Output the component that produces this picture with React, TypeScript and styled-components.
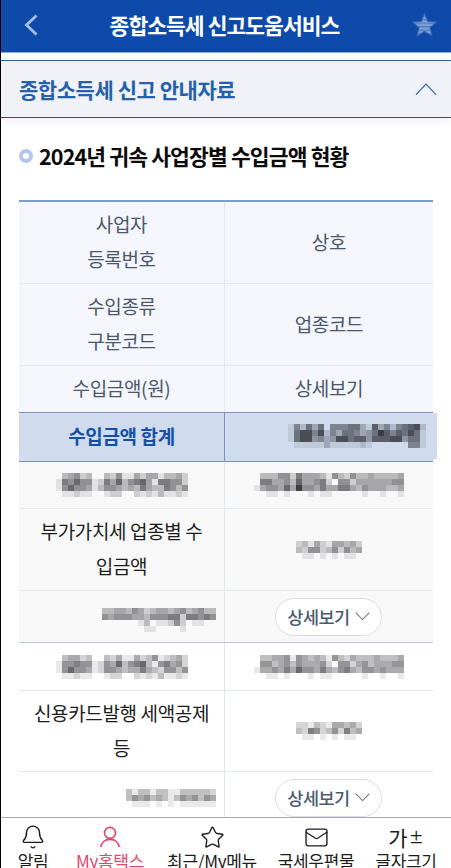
import React from "react";
import styled, { createGlobalStyle } from "styled-components";
import { Bell, Star, Mail } from "lucide-react";

const Global = createGlobalStyle`
  html, body { margin: 0; padding: 0; background: #fff; }
  body { font-family: "Noto Sans CJK KR", "Noto Sans", sans-serif; }
  * { box-sizing: border-box; }
`;

const Page = styled.div`
  width: 451px;
  height: 868px;
  overflow: hidden;
  display: flex;
  flex-direction: column;
  border-left: 1px solid #000;
  background: #fff;
`;

const Header = styled.header`
  flex: none;
  height: 53px;
  background: #0d4aa9;
  border-bottom: 1px solid #8fb0dc;
  display: flex;
  align-items: center;
  justify-content: space-between;
  padding: 0 13px 2px 23px;
  color: #fff;
`;

const HeaderTitle = styled.h1`
  margin: 0;
  font-size: 21.5px;
  font-weight: 700;
  letter-spacing: -0.95px;
  line-height: 30px;
`;

const Main = styled.main`
  flex: 1;
  min-height: 0;
  overflow: hidden;
  padding-top: 7px;
`;

const Accordion = styled.div`
  height: 58px;
  background: #f0f2f8;
  border-top: 1px solid #2c62aa;
  border-bottom: 1px solid #1f5298;
  box-shadow: 0 3px 9px rgba(30, 50, 90, 0.08);
  display: flex;
  align-items: center;
  justify-content: space-between;
  padding: 0 14px 0 18px;
`;

const AccordionTitle = styled.h2`
  margin: 0;
  font-size: 21px;
  font-weight: 700;
  letter-spacing: -0.45px;
  color: #2461a9;
  line-height: 28px;
`;

const SectionTitle = styled.h3`
  margin: 23px 0 29px 18px;
  display: flex;
  align-items: center;
  gap: 6px;
  font-size: 21.5px;
  line-height: 30px;
  font-weight: 700;
  letter-spacing: -0.85px;
  color: #0b0b0b;
`;

const Bullet = styled.span`
  width: 14px;
  height: 14px;
  border-radius: 50%;
  border: 4px solid #b2c6e6;
  background: #fff;
`;

const Table = styled.div`
  margin: 0 18px;
  border-top: 2px solid #7f9dc6;
`;

type Tone = "head" | "sum" | "gray" | "white";

const toneBg: Record<Tone, string> = {
  head: "#f4f6fb",
  sum: "#d0dcee",
  gray: "#f8f8f8",
  white: "#ffffff",
};

const Row = styled.div<{ $tone: Tone; $h: number; $line?: string }>`
  display: flex;
  height: ${(p) => p.$h}px;
  background: ${(p) => toneBg[p.$tone]};
  border-bottom: 1px solid ${(p) => p.$line ?? "#e3e8ef"};
  position: relative;
`;

const Cell = styled.div<{ $side: "l" | "r"; $tone: Tone; $end?: boolean }>`
  flex: ${(p) => (p.$side === "l" ? "0 0 206px" : "1 1 0")};
  min-width: 0;
  display: flex;
  align-items: center;
  justify-content: ${(p) => (p.$end ? "flex-end" : "center")};
  padding: 0 ${(p) => (p.$end ? 8 : 11)}px 0 ${(p) => (p.$end ? 0 : 11)}px;
  text-align: center;
  font-size: 19px;
  line-height: 35px;
  letter-spacing: -0.35px;
  color: ${(p) => (p.$tone === "head" ? "#4a566c" : "#1c1c1c")};
  border-right: ${(p) =>
    p.$side === "l" ? `1px solid ${p.$tone === "sum" ? "#7d92b5" : "#e1e7f0"}` : "none"};
`;

const CellText = styled.span`
  display: block;
  padding-bottom: 3px;
`;

const SumLabel = styled.strong`
  display: block;
  padding-bottom: 3px;
  font-weight: 700;
  color: #1550a8;
  letter-spacing: -0.35px;
`;

const SumPatch = styled.div`
  position: absolute;
  left: 244px;
  right: -4px;
  top: 0;
  bottom: 2px;
  background: #d0dcee;
  display: flex;
  align-items: center;
  justify-content: flex-end;
  padding-right: 11px;
`;

const DetailButton = styled.button`
  width: 107px;
  height: 38px;
  margin-left: -1px;
  border: 1px solid #d9dee6;
  border-radius: 19px;
  background: #fff;
  color: #4b5a72;
  font: 500 17.5px/24px "Noto Sans CJK KR", sans-serif;
  letter-spacing: -0.5px;
  display: flex;
  align-items: center;
  justify-content: center;
  gap: 5px;
  padding: 0;
`;

const BottomNav = styled.nav`
  flex: none;
  height: 51px;
  border-top: 1px solid #a9a9a9;
  background: #fff;
  display: grid;
  grid-template-columns: 64px 90px 114px 94px 86px;
  padding-top: 7px;
  overflow: hidden;
`;

const NavItem = styled.div<{ $active?: boolean }>`
  display: flex;
  flex-direction: column;
  align-items: center;
  color: ${(p) => (p.$active ? "#e0486c" : "#1c1c1c")};
`;

const NavIcon = styled.div`
  height: 24px;
  display: flex;
  align-items: center;
  justify-content: center;
`;

const NavLabel = styled.span`
  font-size: 17px;
  line-height: 24px;
  letter-spacing: -0.3px;
  white-space: nowrap;
`;

const FontIcon = styled.span`
  font-size: 21px;
  line-height: 24px;
  color: #1c1c1c;
  display: flex;
  align-items: center;
`;

const FontPlus = styled.span`
  font-size: 15px;
  font-weight: 500;
  margin-left: 1px;
`;

const MosaicSvg = styled.svg`
  display: block;
  flex: none;
`;

const Mosaic = ({ rows, cell = 6 }: { rows: string[]; cell?: number }) => {
  const w = rows[0].length * cell;
  return (
    <MosaicSvg width={w} height={rows.length * cell} shapeRendering="crispEdges">
      {rows.flatMap((r, y) =>
        r.split("").map((c, x) =>
          c === "0" ? null : (
            <rect
              key={`${x}-${y}`}
              x={x * cell}
              y={y * cell}
              width={cell}
              height={cell}
              fill="#2a2a30"
              opacity={Number(c) / 10}
            />
          )
        )
      )}
    </MosaicSvg>
  );
};

const Chevron = ({ up, w, color }: { up?: boolean; w: number; color: string }) => (
  <svg width={w} height={w * 0.55} viewBox="0 0 22 12" fill="none">
    <path d={up ? "M1 11.5 11 1l10 10.5" : "M1 .8 11 11 21 .8"} stroke={color} strokeWidth={w > 20 ? 1.2 : 1.5} />
  </svg>
);

const BackIcon = () => (
  <svg width="14" height="22" viewBox="0 0 14 22" fill="none">
    <path d="M12.5 1.5 2.5 11l10 9.5" stroke="#a9c0e6" strokeWidth="2.8" />
  </svg>
);

const StripedStar = () => (
  <svg width="27" height="27" viewBox="0 0 26 26">
    <defs>
      <pattern id="stripes" width="4" height="3.4" patternUnits="userSpaceOnUse">
        <rect width="4" height="3.4" fill="#7d9fd4" />
        <rect width="4" height="1.2" fill="#4d7bc2" />
      </pattern>
    </defs>
    <path
      d="M13 1.5l3.3 7.6 8.4.6-6.4 5.3 2.1 8.2L13 18.8 5.6 23.2l2.1-8.2L1.3 9.7l8.4-.6z"
      fill="url(#stripes)"
      stroke="#2f62b3"
      strokeWidth="1"
      strokeLinejoin="round"
    />
  </svg>
);

const UserIcon = () => (
  <svg width="22" height="22" viewBox="0 0 24 24" fill="none" stroke="#e0486c" strokeWidth="1.8">
    <circle cx="12" cy="7.5" r="6" />
    <path d="M2 23c.6-5 4.4-8.4 10-8.4S21.4 18 22 23" />
  </svg>
);

const sumRows = [
  "15263605556631735256782",
  "16885825366534697576861",
  "16884534886774777884661",
  "01111131111121000000551",
];
const bizA = [
  "0345230032511424413342",
  "1657551264735674166552",
  "1575541355434364336535",
  "0112110012200212131121",
];
const nameA = [
  "0333552644431532533433334",
  "0664453744562055244444455",
  "1455474955464466435444334",
  "0011010001011000001001001",
];
const dateA = ["23142144342", "32552352534", "01101010110"];
const amountA = [
  "0000000000000000000",
  "3344354234434534533",
  "5455544355566266565",
  "0000001301125201100",
  "0000000110000100000",
];
const bizB = [
  "0344230032411423512342",
  "1556551254735673156452",
  "1575541255434464325535",
  "0112110012200212131121",
];
const nameB = [
  "0334451543431532433343334",
  "0553453544452055245344455",
  "1445464755464356435545444",
  "0011010001011000001001001",
];
const dateB = ["22132144342", "32652352634", "01101010110"];
const amountC = ["313313311333332", "354534313545354", "011101010111111"];

export default function App() {
  return (
    <Page>
      <Global />
      <Header>
        <BackIcon />
        <HeaderTitle>종합소득세 신고도움서비스</HeaderTitle>
        <StripedStar />
      </Header>
      <Main>
        <Accordion>
          <AccordionTitle>종합소득세 신고 안내자료</AccordionTitle>
          <Chevron up w={22} color="#2c62aa" />
        </Accordion>
        <SectionTitle>
          <Bullet />
          2024년 귀속 사업장별 수입금액 현황
        </SectionTitle>
        <Table>
          <Row $tone="head" $h={82}>
            <Cell $side="l" $tone="head"><CellText>사업자<br />등록번호</CellText></Cell>
            <Cell $side="r" $tone="head"><CellText>상호</CellText></Cell>
          </Row>
          <Row $tone="head" $h={82}>
            <Cell $side="l" $tone="head"><CellText>수입종류<br />구분코드</CellText></Cell>
            <Cell $side="r" $tone="head"><CellText>업종코드</CellText></Cell>
          </Row>
          <Row $tone="head" $h={47} $line="#7d92b5">
            <Cell $side="l" $tone="head"><CellText>수입금액(원)</CellText></Cell>
            <Cell $side="r" $tone="head"><CellText>상세보기</CellText></Cell>
          </Row>
          <Row $tone="sum" $h={49} $line="#7d92b5">
            <Cell $side="l" $tone="sum"><SumLabel>수입금액 합계</SumLabel></Cell>
            <Cell $side="r" $tone="sum" />
            <SumPatch><Mosaic rows={sumRows} /></SumPatch>
          </Row>
          <Row $tone="gray" $h={47}>
            <Cell $side="l" $tone="gray"><Mosaic rows={bizA} /></Cell>
            <Cell $side="r" $tone="gray"><Mosaic rows={nameA} /></Cell>
          </Row>
          <Row $tone="gray" $h={82}>
            <Cell $side="l" $tone="gray"><CellText>부가가치세 업종별 수<br />입금액</CellText></Cell>
            <Cell $side="r" $tone="gray"><Mosaic rows={dateA} /></Cell>
          </Row>
          <Row $tone="gray" $h={52} $line="#b9c8de">
            <Cell $side="l" $tone="gray" $end><Mosaic rows={amountA} /></Cell>
            <Cell $side="r" $tone="gray">
              <DetailButton>상세보기 <Chevron w={15} color="#6b7688" /></DetailButton>
            </Cell>
          </Row>
          <Row $tone="white" $h={48}>
            <Cell $side="l" $tone="white"><Mosaic rows={bizB} /></Cell>
            <Cell $side="r" $tone="white"><Mosaic rows={nameB} /></Cell>
          </Row>
          <Row $tone="white" $h={81}>
            <Cell $side="l" $tone="white"><CellText>신용카드발행 세액공제<br />등</CellText></Cell>
            <Cell $side="r" $tone="white"><Mosaic rows={dateB} /></Cell>
          </Row>
          <Row $tone="white" $h={52}>
            <Cell $side="l" $tone="white" $end><Mosaic rows={amountC} /></Cell>
            <Cell $side="r" $tone="white">
              <DetailButton>상세보기 <Chevron w={15} color="#6b7688" /></DetailButton>
            </Cell>
          </Row>
        </Table>
      </Main>
      <BottomNav>
        <NavItem>
          <NavIcon><Bell size={26} strokeWidth={1.3} /></NavIcon>
          <NavLabel>알림</NavLabel>
        </NavItem>
        <NavItem $active>
          <NavIcon><UserIcon /></NavIcon>
          <NavLabel>My홈택스</NavLabel>
        </NavItem>
        <NavItem>
          <NavIcon><Star size={25} strokeWidth={1.3} /></NavIcon>
          <NavLabel>최근/My메뉴</NavLabel>
        </NavItem>
        <NavItem>
          <NavIcon><Mail size={25} strokeWidth={1.3} /></NavIcon>
          <NavLabel>국세우편물</NavLabel>
        </NavItem>
        <NavItem>
          <NavIcon><FontIcon>가<FontPlus>±</FontPlus></FontIcon></NavIcon>
          <NavLabel>글자크기</NavLabel>
        </NavItem>
      </BottomNav>
    </Page>
  );
}
